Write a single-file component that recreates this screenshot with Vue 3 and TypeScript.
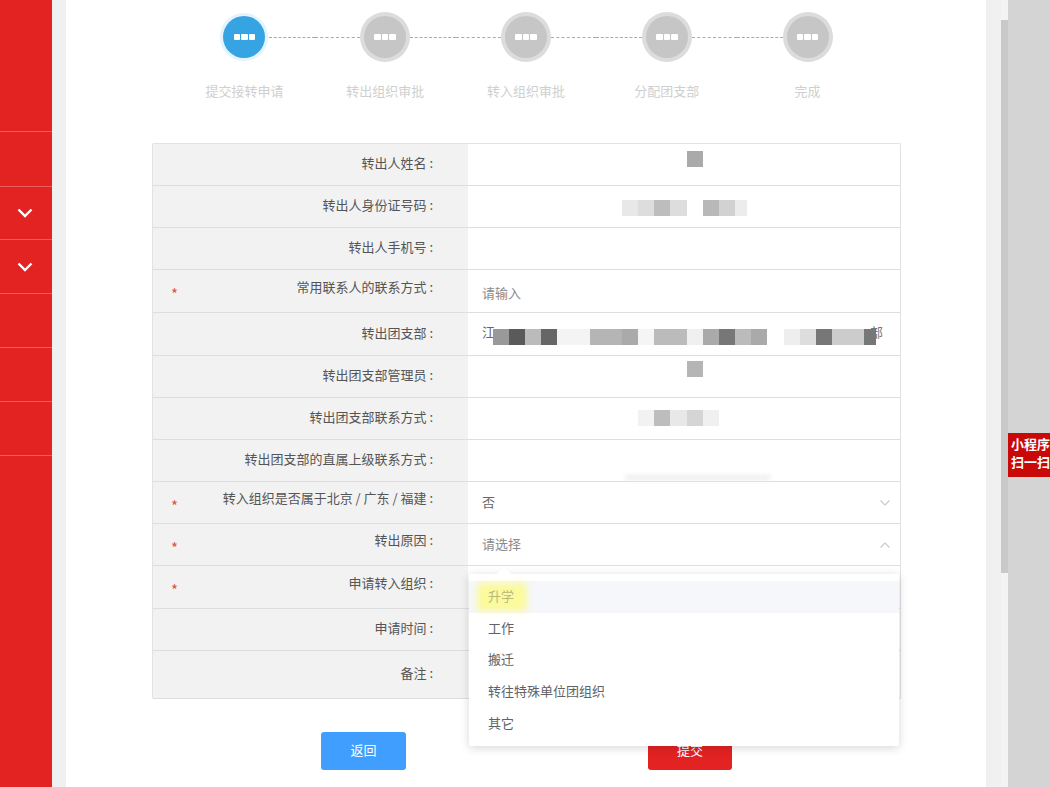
<script setup lang="ts">
interface Tile { w: number; c: string }
interface Mosaic { left: number; top: number; soft?: boolean; tiles: Tile[] }
interface Row {
  label: string; h: number; star?: boolean; raised?: number; shift?: number; value?: string;
  placeholder?: boolean; arrow?: 'up' | 'down'; mosaic?: Mosaic; text2?: string
}
const steps = ['提交接转申请', '转出组织审批', '转入组织审批', '分配团支部', '完成']
const sideItems = [
  { h: 132, c: false }, { h: 55, c: false }, { h: 53, c: true }, { h: 54, c: true },
  { h: 54, c: false }, { h: 54, c: false }, { h: 54, c: false }
]
const rows: Row[] = [
  { label: '转出人姓名 :', h: 42, mosaic: { left: 219, top: 7, tiles: [{ w: 16, c: '#aaaaaa' }] } },
  { label: '转出人身份证号码 :', h: 42, mosaic: { left: 154, top: 14, tiles: [
    { w: 16, c: '#e8e8e8' }, { w: 16, c: '#dddddd' }, { w: 16, c: '#bdbdbd' }, { w: 17, c: '#dddddd' },
    { w: 16, c: 'transparent' }, { w: 16, c: '#b8b8b8' }, { w: 16, c: '#d2d2d2' }, { w: 12, c: '#ececec' }] } },
  { label: '转出人手机号 :', h: 42 },
  { label: '常用联系人的联系方式 :', h: 43, star: true, raised: 10, shift: -2, value: '请输入', placeholder: true },
  { label: '转出团支部 :', h: 43, shift: 6, value: '江', text2: '部', mosaic: { left: 25, top: 16, tiles: [
    { w: 16, c: '#999999' }, { w: 16, c: '#5a5a5a' }, { w: 16, c: '#bbbbbb' }, { w: 16, c: '#666666' },
    { w: 33, c: '#f4f4f4' }, { w: 32, c: '#b5b5b5' }, { w: 16, c: '#aaaaaa' }, { w: 16, c: '#f5f5f5' },
    { w: 33, c: '#bbbbbb' }, { w: 16, c: '#f0f0f0' }, { w: 16, c: '#aaaaaa' }, { w: 16, c: '#777777' },
    { w: 16, c: '#bbbbbb' }, { w: 16, c: '#aaaaaa' }, { w: 17, c: 'transparent' }, { w: 16, c: '#eeeeee' },
    { w: 16, c: '#dddddd' }, { w: 16, c: '#777777' }, { w: 32, c: '#cccccc' }, { w: 12, c: '#777777' }] } },
  { label: '转出团支部管理员 :', h: 42, mosaic: { left: 219, top: 5, tiles: [{ w: 16, c: '#b5b5b5' }] } },
  { label: '转出团支部联系方式 :', h: 42, mosaic: { left: 170, top: 12, tiles: [
    { w: 16, c: '#f2f2f2' }, { w: 16, c: '#bdbdbd' }, { w: 17, c: '#e8e8e8' }, { w: 16, c: '#d5d5d5' }, { w: 16, c: '#f0f0f0' }] } },
  { label: '转出团支部的直属上级联系方式 :', h: 42, mosaic: { left: 157, top: 35, soft: true, tiles: [{ w: 145, c: '#eeeeee' }] } },
  { label: '转入组织是否属于北京 / 广东 / 福建 :', h: 42, star: true, raised: 10, value: '否', arrow: 'down' },
  { label: '转出原因 :', h: 42, star: true, raised: 10, value: '请选择', placeholder: true, arrow: 'up' },
  { label: '申请转入组织 :', h: 43, star: true, raised: 10 },
  { label: '申请时间 :', h: 42 },
  { label: '备注 :', h: 48 }
]
const options = ['升学', '工作', '搬迁', '转往特殊单位团组织', '其它']
function valueShift(r: Row) {
  const s = r.shift ?? 2
  return s >= 0 ? { paddingBottom: s + 'px' } : { paddingTop: -s + 'px' }
}
</script>

<template>
  <div class="screen">
    <aside class="sidebar">
      <div v-for="(item, i) in sideItems" :key="i" class="side-item" :style="{ height: item.h + 'px' }">
        <svg v-if="item.c" width="16" height="10" viewBox="0 0 16 10"><path d="M1.5 1.5 8 8l6.500-6.500" fill="none" stroke="#fff" stroke-width="2.400" /></svg>
      </div>
    </aside>
    <div class="gutter-left"></div>
    <main class="card">
      <div class="steps">
        <div v-for="(s, i) in steps" :key="s" class="step">
          <div class="step-head">
            <span class="line" :class="{ hidden: i === 0 }"></span>
            <span class="circle" :class="{ active: i === 0 }"><i></i><i></i><i></i></span>
            <span class="line" :class="{ hidden: i === steps.length - 1 }"></span>
          </div>
          <div class="step-label">{{ s }}</div>
        </div>
      </div>

      <div class="table">
        <div v-for="r in rows" :key="r.label" class="row" :style="{ height: r.h + 'px' }">
          <div class="label-cell">
            <span v-if="r.star" class="star">*</span>
            <span class="label" :style="{ paddingBottom: (r.raised ?? 4) + 'px' }">{{ r.label }}</span>
          </div>
          <div class="value-cell" :style="valueShift(r)">
            <span v-if="r.value" :class="{ placeholder: r.placeholder }">{{ r.value }}</span>
            <span v-if="r.text2" class="tail">{{ r.text2 }}</span>
            <div v-if="r.mosaic" class="mosaic" :class="{ soft: r.mosaic.soft }" :style="{ left: r.mosaic.left + 'px', top: r.mosaic.top + 'px' }">
              <span v-for="(t, k) in r.mosaic.tiles" :key="k" :style="{ width: t.w + 'px', background: t.c }"></span>
            </div>
            <svg v-if="r.arrow" class="arrow" width="12" height="8" viewBox="0 0 12 8">
              <path :d="r.arrow === 'down' ? 'M1.500 1.500 6 6l4.500-4.500' : 'M1.500 6.500 6 2l4.500 4.500'" fill="none" stroke="#c8c8c8" stroke-width="1.100" />
            </svg>
          </div>
        </div>
      </div>

      <div class="actions">
        <button class="btn back">返回</button>
        <button class="btn submit">提交</button>
      </div>

      <div class="dropdown">
        <div v-for="(o, i) in options" :key="o" class="option" :class="{ hover: i === 0 }">
          <span v-if="i === 0" class="marker"></span>
          <span class="option-text">{{ o }}</span>
        </div>
      </div>
    </main>
    <div class="gutter-right"></div>
    <div class="scrollbar"><div class="thumb"></div></div>
    <div class="right-panel">
      <div class="tag">小程序<br />扫一扫</div>
    </div>
  </div>
</template>

<style scoped>
.screen {
  display: flex;
  width: 1050px;
  height: 787px;
  overflow: hidden;
  font-family: "Noto Sans CJK SC", "Liberation Sans", sans-serif;
  font-size: 13px;
  color: #555;
}
.sidebar { width: 52px; flex: none; background: #e32222; }
.side-item {
  box-sizing: border-box;
  border-bottom: 1px solid #ee5c5c;
  display: flex;
  align-items: center;
  justify-content: center;
  padding-right: 2px;
}
.gutter-left { width: 14px; flex: none; background: #f0f0f0; }
.gutter-right { width: 15px; flex: none; background: #f0f0f0; }
.card {
  position: relative;
  width: 920px;
  flex: none;
  box-sizing: border-box;
  background: #fff;
  padding: 12px 85px 0 86px;
}
.steps { display: flex; width: 704px; margin-left: 22px; }
.step { width: 140.800px; flex: none; }
.step-head { display: flex; align-items: center; height: 50px; }
.line { flex: 1; border-top: 1px dashed #aaa; }
.line.hidden { border-color: transparent; }
.circle {
  box-sizing: border-box;
  width: 42px;
  height: 42px;
  margin: 0 4px;
  border-radius: 50%;
  background: #c6c6c6;
  box-shadow: 0 0 0 4px #dcdcdc;
  display: flex;
  align-items: center;
  justify-content: center;
  gap: 1px;
}
.circle.active { background: #36a3e3; box-shadow: 0 0 0 3px #e3f4fd; }
.circle i { width: 6.500px; height: 6px; background: #fff; border-radius: 1px; }
.step-label { margin-top: 19px; margin-bottom: 1px; text-align: center; color: #cfcfcf; line-height: 20px; }
.table {
  box-sizing: border-box;
  width: 749px;
  margin-top: 41px;
  border: 1px solid #e2e2e2;
  border-bottom: 0;
  border-radius: 2px;
}
.row {
  box-sizing: border-box;
  display: flex;
  border-bottom: 1px solid #dedede;
}
.label-cell {
  width: 315px;
  flex: none;
  box-sizing: border-box;
  background: #f2f2f2;
  display: flex;
  align-items: center;
  padding: 0 35px 0 18px;
}
.star { color: #d9534f; font-size: 15px; line-height: 1; padding-top: 5px; }
.label { flex: 1; text-align: right; white-space: nowrap; color: #555; }
.value-cell {
  position: relative;
  flex: 1;
  display: flex;
  align-items: center;
  padding-left: 14px;
  padding-right: 13px;
  color: #666;
}
.placeholder { color: #8a8a8a; }
.tail { position: absolute; left: 402px; color: #777; }
.arrow { position: absolute; right: 9px; top: 50%; margin-top: -4px; }
.mosaic { position: absolute; display: flex; height: 16px; }
.mosaic.soft { height: 5px; filter: blur(2px); }
.actions { display: flex; gap: 242px; margin-top: 33px; padding-left: 169px; }
.btn {
  box-sizing: border-box;
  width: 85px;
  height: 38px;
  border: 0;
  padding: 0 0 3px;
  border-radius: 3px;
  color: #fff;
  font: inherit;
}
.back { background: #409eff; }
.submit { background: #e32222; width: 84px; }
.dropdown {
  position: absolute;
  left: 403px;
  top: 574px;
  box-sizing: border-box;
  width: 430px;
  height: 172px;
  padding-top: 7px;
  background: #fff;
  border-radius: 2px;
  box-shadow: 0 2px 10px rgba(0, 0, 0, 0.16);
}
.dropdown::before {
  content: "";
  position: absolute;
  left: 30px;
  top: -5px;
  width: 10px;
  height: 10px;
  background: #fff;
  transform: rotate(45deg);
}
.option {
  position: relative;
  height: 31.700px;
  line-height: 29px;
  padding-left: 19px;
  color: #606266;
}
.option.hover { background: #f5f7fa; color: #b9b97c; }
.option-text { position: relative; }
.marker {
  position: absolute;
  left: 8px;
  top: 2px;
  width: 50px;
  height: 28px;
  background: #fbfa9c;
  border-radius: 4px;
  filter: blur(3px);
}
.scrollbar { width: 7px; flex: none; box-sizing: border-box; padding-top: 20px; background: #f3f3f3; }
.thumb { height: 553px; background: #c9c9c9; }
.right-panel { flex: 1; background: #d4d4d4; padding-top: 433px; overflow: hidden; }
.tag {
  box-sizing: border-box;
  width: 42px;
  height: 44px;
  padding: 2px 0 0 3px;
  background: #c90808;
  color: #fff;
  font-weight: 700;
  font-size: 13px;
  line-height: 18px;
  white-space: nowrap;
  overflow: hidden;
}
</style>
